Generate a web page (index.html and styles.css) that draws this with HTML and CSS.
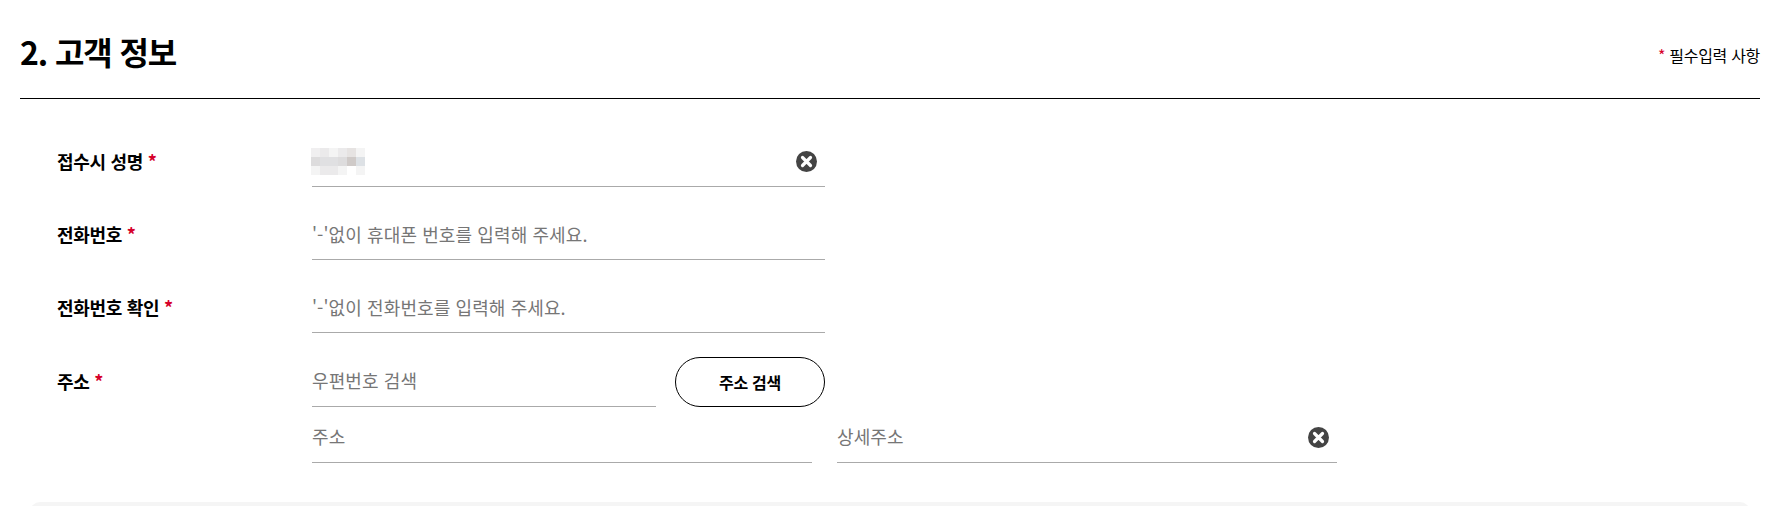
FILE: index.html
```html
<!DOCTYPE html>
<html lang="ko">
<head>
	<title>고객 정보</title>
	<link rel="stylesheet" href="styles.css">
</head>
<body>
	<div class="section">
		<div class="section-head">
			<h2>2. 고객 정보</h2>
			<div class="required-note"><span class="star">*</span> 필수입력 사항</div>
		</div>
		<div class="form">
			<div class="form-row">
				<div class="form-label">접수시 성명 <span class="star">*</span></div>
				<div class="form-fields">
					<div class="field field-main">
						<div class="mosaic">
							<i class="m1"></i><i class="m2"></i><i class="m3"></i><i class="m2"></i><i class="m4"></i><i class="m3"></i>
							<i class="m5"></i><i class="m6"></i><i class="m6"></i><i class="m5"></i><i class="m7"></i><i class="m8"></i>
							<i class="m3"></i><i class="m2"></i><i class="m2"></i><i class="m3"></i><i class="m0"></i><i class="m3"></i>
						</div>
						<input type="text" aria-label="접수시 성명">
						<button class="clear" type="button" aria-label="지우기">
							<svg viewBox="0 0 21 21" width="21" height="21"><circle cx="10.5" cy="10.5" r="10.5" fill="#444"/><path d="M6.5 6.5l8 8M14.5 6.5l-8 8" stroke="#fff" stroke-width="3.2" stroke-linecap="round"/></svg>
						</button>
					</div>
				</div>
			</div>
			<div class="form-row">
				<div class="form-label">전화번호 <span class="star">*</span></div>
				<div class="form-fields">
					<div class="field field-main"><input type="text" placeholder="'-'없이 휴대폰 번호를 입력해 주세요."></div>
				</div>
			</div>
			<div class="form-row">
				<div class="form-label">전화번호 확인 <span class="star">*</span></div>
				<div class="form-fields">
					<div class="field field-main"><input type="text" placeholder="'-'없이 전화번호를 입력해 주세요."></div>
				</div>
			</div>
			<div class="form-row form-row-address">
				<div class="form-label">주소 <span class="star">*</span></div>
				<div class="form-fields">
					<div class="zip-line">
						<div class="field field-zip"><input type="text" placeholder="우편번호 검색"></div>
						<button class="search-btn" type="button">주소 검색</button>
					</div>
					<div class="address-line">
						<div class="field field-address"><input type="text" placeholder="주소"></div>
						<div class="field field-address">
							<input type="text" placeholder="상세주소">
							<button class="clear" type="button" aria-label="지우기">
								<svg viewBox="0 0 21 21" width="21" height="21"><circle cx="10.5" cy="10.5" r="10.5" fill="#444"/><path d="M6.5 6.5l8 8M14.5 6.5l-8 8" stroke="#fff" stroke-width="3.2" stroke-linecap="round"/></svg>
							</button>
						</div>
					</div>
				</div>
			</div>
		</div>
		<div class="next-panel"></div>
	</div>
</body>
</html>
```

FILE: styles.css
```css
html, body {
	height: 506px;
	overflow: hidden;
}
body {
	margin: 0;
	background-color: #fff;
	color: #000;
	font-family: "Noto Sans CJK KR", "Noto Sans", sans-serif;
}
.section {
	padding: 0 28px 0 20px;
}
.section-head {
	display: flex;
	justify-content: space-between;
	align-items: center;
	height: 98px;
	border-bottom: 1px solid #000;
}
.section-head h2 {
	margin: 4px 0 0;
	font-size: 32px;
	font-weight: 700;
	letter-spacing: -1.1px;
}
.required-note {
	margin-top: 12px;
	font-size: 16px;
	letter-spacing: -0.3px;
}
.star {
	color: #d6002a;
}
.form {
	padding-top: 38px;
}
.form-row {
	display: flex;
	margin-bottom: 23.2px;
	padding-left: 37px;
}
.form-label {
	width: 255px;
	flex: none;
	padding-top: 11px;
	font-size: 18px;
	line-height: 26px;
	font-weight: 700;
	letter-spacing: -0.3px;
}
.form-fields {
	display: flex;
	flex-direction: column;
	gap: 6px;
}
.field {
	display: flex;
	align-items: center;
	height: 49px;
	border-bottom: 1px solid #aaa;
}
.field input {
	flex: 1;
	min-width: 0;
	height: 47px;
	margin-bottom: 2px;
	border: 0;
	outline: 0;
	padding: 0;
	background: none;
	font-family: inherit;
	font-size: 18px;
	letter-spacing: 0.1px;
}
.field input::placeholder {
	color: #767676;
	opacity: 1;
}
.field-main {
	width: 513px;
}
.field-zip {
	width: 344px;
}
.field-address {
	width: 500px;
}
.zip-line {
	display: flex;
	justify-content: space-between;
	width: 513px;
}
.address-line {
	display: flex;
	gap: 25px;
}
.search-btn {
	width: 150px;
	height: 50px;
	border: 1px solid #000;
	border-radius: 25px;
	background: #fff;
	font-family: inherit;
	font-size: 16px;
	font-weight: 700;
	letter-spacing: -0.3px;
	color: #000;
}
.clear {
	flex: none;
	display: flex;
	width: 21px;
	height: 21px;
	margin-right: 8px;
	padding: 0;
	border: 0;
	background: none;
}
.mosaic {
	display: grid;
	grid-template-columns: repeat(6, 9px);
	grid-auto-rows: 9px;
	flex: none;
	margin-left: -1px;
}
.mosaic i {
	display: block;
}
.m0 { background: #fff; }
.m1 { background: #f0eff0; }
.m2 { background: #ebeaeb; }
.m3 { background: #f4f4f4; }
.m4 { background: #e6e3e2; }
.m5 { background: #dddcdd; }
.m6 { background: #e0e0e2; }
.m7 { background: #cfcac8; }
.m8 { background: #dde1e5; }
.next-panel {
	height: 10px;
	margin: 39px 10px 0;
	border-radius: 14px 14px 0 0;
	background: #f5f5f5;
}
```
